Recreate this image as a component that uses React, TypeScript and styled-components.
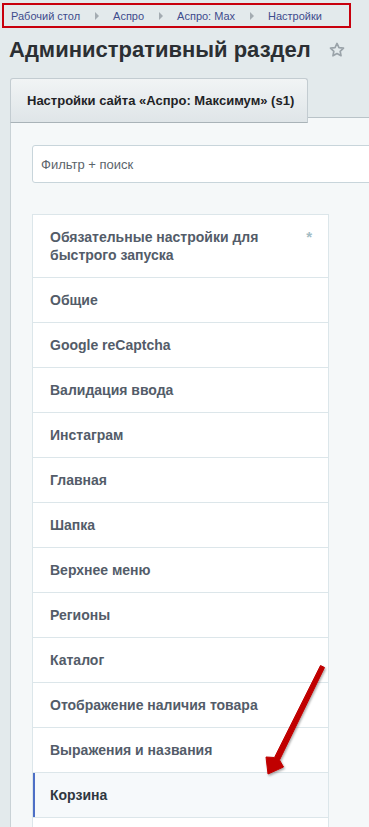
import styled, { createGlobalStyle, css } from 'styled-components';

const GlobalStyle = createGlobalStyle`
  html, body {
    margin: 0;
    padding: 0;
    background: #e3eaec;
    overflow: hidden;
  }
  body {
    font-family: 'Liberation Sans', Arial, sans-serif;
  }
`;

const Page = styled.div`
  position: relative;
  width: 369px;
  height: 827px;
  overflow: hidden;
`;

const Breadcrumbs = styled.nav`
  box-sizing: border-box;
  display: flex;
  align-items: center;
  width: 349px;
  height: 25px;
  margin: 3px 0 0 2px;
  padding-left: 7px;
  border: 2px solid #c8000d;
  font-size: 11px;
`;

const Crumb = styled.span`
  color: #3e4c8d;
  white-space: nowrap;
`;

const CrumbArrow = styled.span`
  width: 0;
  height: 0;
  margin: 0 14px 0 15px;
  border-top: 4px solid transparent;
  border-bottom: 4px solid transparent;
  border-left: 4px solid #a4acb2;
`;

const TitleRow = styled.div`
  display: flex;
  align-items: center;
  height: 34px;
  margin-top: 5px;
  padding-left: 9px;
  gap: 17px;
`;

const Title = styled.h1`
  margin: 0;
  font-size: 22px;
  font-weight: bold;
  color: #2b2f33;
  white-space: nowrap;
`;

const TabRow = styled.div`
  display: flex;
  margin-top: 11px;
  padding-left: 10px;
`;

const Tab = styled.div`
  box-sizing: border-box;
  height: 45px;
  width: 298px;
  padding-left: 16px;
  display: flex;
  align-items: center;
  border: 1px solid #c3ccd1;
  border-bottom-color: #a9b3b8;
  border-radius: 3px 3px 0 0;
  background: linear-gradient(#f1f4f5, #dfe5e8);
  font-size: 13px;
  font-weight: bold;
  color: #1f2326;
  white-space: nowrap;
`;

const TabFiller = styled.div`
  flex: 1;
  margin-top: 39px;
  border-top: 1px solid #b9c3c8;
  background: #f5f8f9;
`;

const Panel = styled.div`
  margin-left: 10px;
  padding: 22px 0 0 21px;
  border-left: 1px solid #c9d2d6;
  background: #f5f8f9;
  height: 800px;
`;

const Filter = styled.div`
  box-sizing: border-box;
  width: 420px;
  height: 38px;
  display: flex;
  align-items: center;
  padding-left: 8px;
  border: 1px solid #c8d5db;
  border-radius: 3px;
  background: #fff;
  font-size: 13px;
  color: #5b646b;
`;

const List = styled.ul`
  width: 297px;
  margin: 31px 0 0;
  padding: 0;
  list-style: none;
  box-sizing: border-box;
  border: 1px solid #dce6ea;
  border-bottom: none;
  background: #fff;
`;

const Item = styled.li<{ $tall?: boolean; $active?: boolean }>`
  box-sizing: border-box;
  display: flex;
  justify-content: space-between;
  align-items: center;
  height: ${(p) => (p.$tall ? 63 : 45)}px;
  padding: 0 16px 0 17px;
  border-bottom: 1px solid #dce6ea;
  font-size: 14px;
  font-weight: bold;
  line-height: 18px;
  color: #535c69;

  ${(p) =>
    p.$active &&
    css`
      background: #f6f9fb;
      color: #2f3740;
      box-shadow: inset 2px 0 0 #4d6fc6;
    `}
`;

const ItemText = styled.span`
  max-width: 230px;
  padding-bottom: 1px;
`;

const Required = styled.span`
  align-self: flex-start;
  margin-top: 13px;
  font-size: 15px;
  color: #a3bcc4;
`;

const Overlay = styled.svg`
  position: absolute;
  left: 0;
  top: 0;
  pointer-events: none;
`;

const items = [
  'Общие',
  'Google reCaptcha',
  'Валидация ввода',
  'Инстаграм',
  'Главная',
  'Шапка',
  'Верхнее меню',
  'Регионы',
  'Каталог',
  'Отображение наличия товара',
  'Выражения и названия',
];

const crumbs = ['Рабочий стол', 'Аспро', 'Аспро: Max', 'Настройки'];

export default function App() {
  return (
    <Page>
      <GlobalStyle />
      <Breadcrumbs>
        {crumbs.map((c, i) => (
          <>
            {i > 0 && <CrumbArrow key={'a' + i} />}
            <Crumb key={c}>{c}</Crumb>
          </>
        ))}
      </Breadcrumbs>
      <TitleRow>
        <Title>Административный раздел</Title>
        <svg width="18" height="18" viewBox="0 0 24 24">
          <path
            d="M12 3.2l2.6 5.6 6.1.7-4.5 4.2 1.2 6-5.4-3-5.4 3 1.2-6-4.5-4.2 6.1-.7z"
            fill="none"
            stroke="#9aa3a9"
            strokeWidth="2.2"
            strokeLinejoin="round"
          />
        </svg>
      </TitleRow>
      <TabRow>
        <Tab>Настройки сайта «Аспро: Максимум» (s1)</Tab>
        <TabFiller />
      </TabRow>
      <Panel>
        <Filter>Фильтр + поиск</Filter>
        <List>
          <Item $tall>
            <ItemText>Обязательные настройки для быстрого запуска</ItemText>
            <Required>*</Required>
          </Item>
          {items.map((t) => (
            <Item key={t}>
              <ItemText>{t}</ItemText>
            </Item>
          ))}
          <Item $active>
            <ItemText>Корзина</ItemText>
          </Item>
          <Item />
        </List>
      </Panel>
      <Overlay width="369" height="827" viewBox="0 0 369 827">
        <defs>
          <filter id="sh" x="-20%" y="-20%" width="140%" height="140%">
            <feDropShadow dx="1" dy="1.5" stdDeviation="1.2" floodColor="#000" floodOpacity="0.35" />
          </filter>
        </defs>
        <polygon
          points="320.5,665.5 324.5,667.5 279.5,760 283.5,767 268,774 266,757 274.5,757.5"
          fill="#c00000"
          stroke="#c00000"
          strokeWidth="1"
          strokeLinejoin="round"
          filter="url(#sh)"
        />
      </Overlay>
    </Page>
  );
}
